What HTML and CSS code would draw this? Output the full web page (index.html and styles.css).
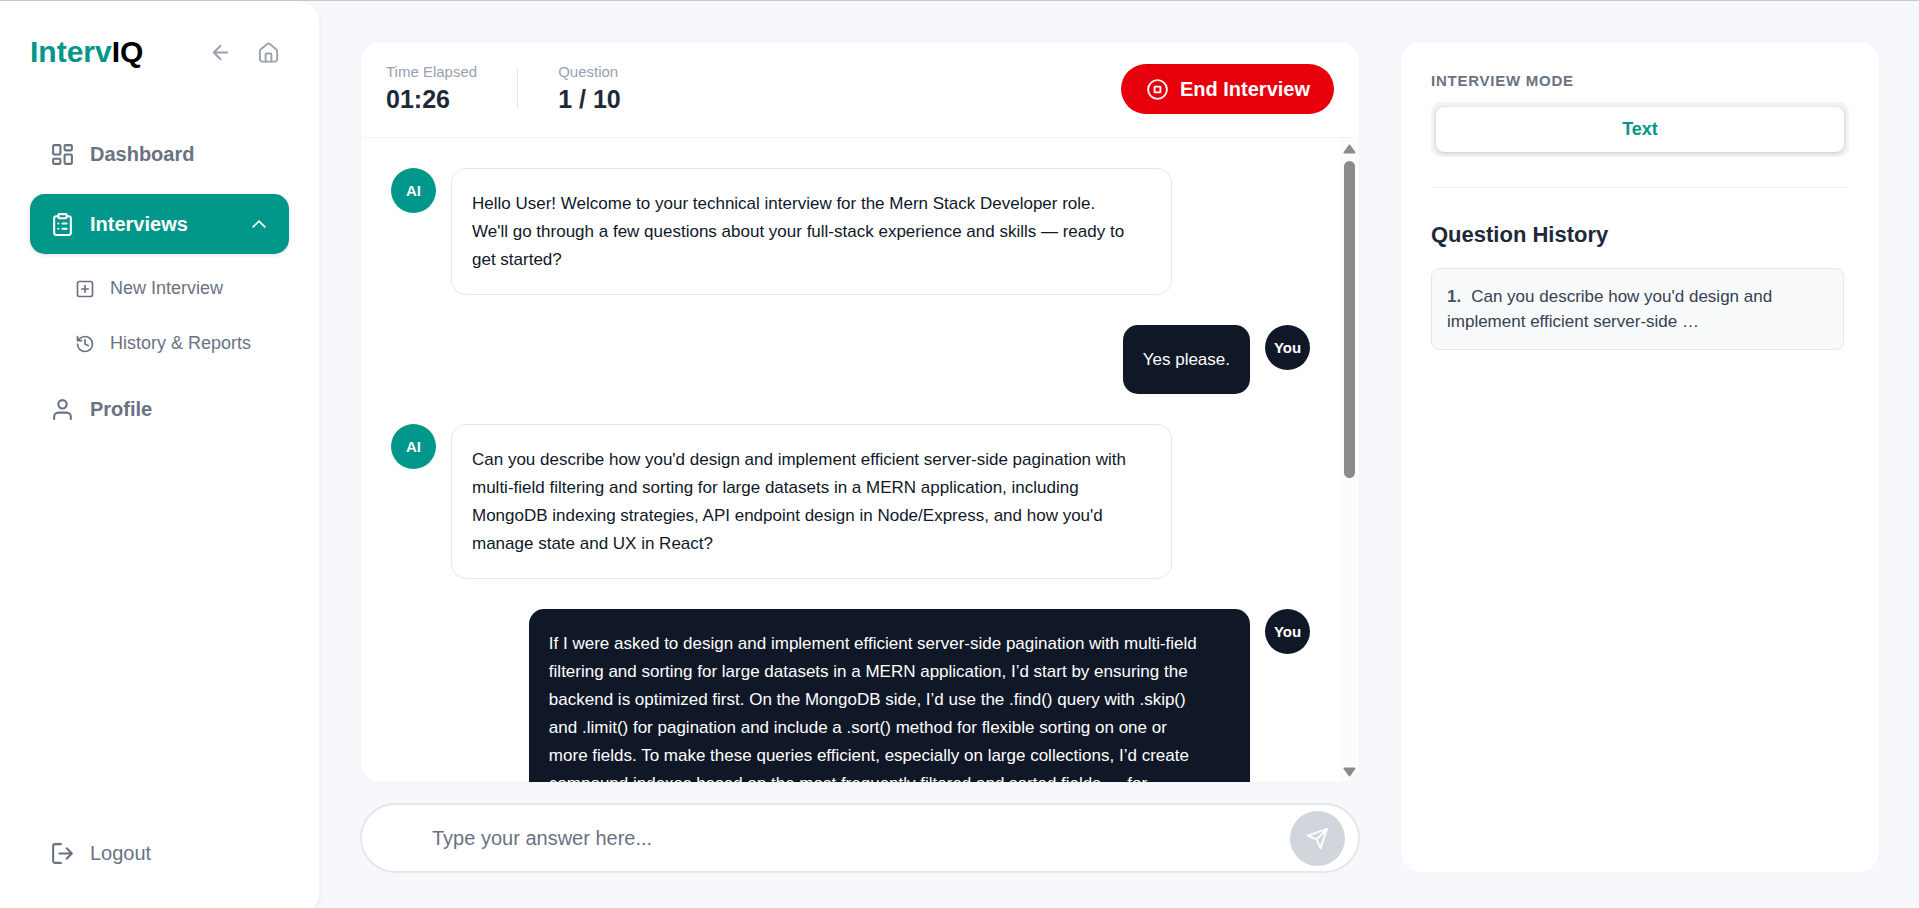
FILE: index.html
```html
<!DOCTYPE html>
<html lang="en">
<head>
<meta charset="utf-8">
<meta name="viewport" content="width=device-width, initial-scale=1">
<title>IntervIQ</title>
<link rel="stylesheet" href="styles.css">
</head>
<body>
<div class="app">
  <aside class="sidebar">
    <div class="brand-row">
      <a class="brand" href="#"><span class="brand-accent">Interv</span>IQ</a>
      <div class="brand-actions">
        <button class="icon-button" type="button" aria-label="Back"><svg class="icon icon-md" viewBox="0 0 24 24"><path d="M19 12H5M12 19l-7-7 7-7"/></svg></button>
        <a class="icon-button" href="#" aria-label="Home"><svg class="icon icon-md" viewBox="0 0 24 24"><path d="M3 10.500a2 2 0 0 1 .8-1.600l7-5.900a2 2 0 0 1 2.400 0l7 5.900a2 2 0 0 1 .8 1.600V19a2.500 2.500 0 0 1-2.500 2.500h-13A2.500 2.500 0 0 1 3 19z"/><path d="M9 21.500V14a1 1 0 0 1 1-1h4a1 1 0 0 1 1 1v7.500"/></svg></a>
      </div>
    </div>
    <nav class="nav">
      <a class="nav-item" href="#"><svg class="icon" viewBox="0 0 24 24"><rect x="3" y="3" width="7" height="9" rx="1"/><rect x="14" y="3" width="7" height="5" rx="1"/><rect x="14" y="12" width="7" height="9" rx="1"/><rect x="3" y="16" width="7" height="5" rx="1"/></svg>Dashboard</a>
      <button class="nav-item nav-active" type="button" aria-expanded="true"><svg class="icon" viewBox="0 0 24 24"><rect x="8" y="2" width="8" height="4" rx="1"/><path d="M16 4h2a2 2 0 0 1 2 2v14a2 2 0 0 1-2 2H6a2 2 0 0 1-2-2V6a2 2 0 0 1 2-2h2M12 11h4M12 16h4M8 11h.01M8 16h.01"/></svg>Interviews<svg class="icon icon-sm nav-chevron" viewBox="0 0 24 24"><path d="m5 15.500 7-7 7 7"/></svg></button>
      <div class="subnav">
        <a class="subnav-item" href="#"><svg class="icon icon-sm" viewBox="0 0 24 24"><rect x="3" y="3" width="18" height="18" rx="2"/><path d="M8 12h8M12 8v8"/></svg>New Interview</a>
        <a class="subnav-item" href="#"><svg class="icon icon-sm" viewBox="0 0 24 24"><path d="M3 12a9 9 0 1 0 9-9 9.750 9.750 0 0 0-6.740 2.740L3 8M3 3v5h5M12 7v5l4 2"/></svg>History &amp; Reports</a>
      </div>
      <a class="nav-item" href="#"><svg class="icon" viewBox="0 0 24 24"><circle cx="12" cy="7" r="4"/><path d="M20 21v-2a4 4 0 0 0-4-4H8a4 4 0 0 0-4 4v2"/></svg>Profile</a>
    </nav>
    <button class="nav-item logout" type="button"><svg class="icon" viewBox="0 0 24 24"><path d="M10.500 3H5a2 2 0 0 0-2 2v14a2 2 0 0 0 2 2h5.500M9 12h12M16 7l5 5-5 5"/></svg>Logout</button>
  </aside>

  <main class="main">
    <div class="chat-column">
      <section class="card chat">
        <header class="chat-header">
          <div class="stat"><span class="stat-label">Time Elapsed</span><span class="stat-value">01:26</span></div>
          <div class="stat-divider"></div>
          <div class="stat"><span class="stat-label">Question</span><span class="stat-value">1 / 10</span></div>
          <button class="end-button" type="button"><svg class="icon icon-thin" viewBox="0 0 24 24"><circle cx="12" cy="12" r="9"/><rect x="9.200" y="9.200" width="5.600" height="5.600" rx=".5"/></svg>End Interview</button>
        </header>
        <div class="chat-body">
          <div class="messages">
            <div class="message">
              <div class="avatar avatar-ai">AI</div>
              <p class="bubble bubble-ai">Hello User! Welcome to your technical interview for the Mern Stack Developer role.<br>We'll go through a few questions about your full-stack experience and skills — ready to<br>get started?</p>
            </div>
            <div class="message message-user">
              <div class="avatar avatar-user">You</div>
              <p class="bubble bubble-user">Yes please.</p>
            </div>
            <div class="message message-wide">
              <div class="avatar avatar-ai">AI</div>
              <p class="bubble bubble-ai">Can you describe how you'd design and implement efficient server-side pagination with<br>multi-field filtering and sorting for large datasets in a MERN application, including<br>MongoDB indexing strategies, API endpoint design in Node/Express, and how you'd<br>manage state and UX in React?</p>
            </div>
            <div class="message message-user message-wide">
              <div class="avatar avatar-user">You</div>
              <p class="bubble bubble-user">If I were asked to design and implement efficient server-side pagination with multi-field<br>filtering and sorting for large datasets in a MERN application, I’d start by ensuring the<br>backend is optimized first. On the MongoDB side, I’d use the .find() query with .skip()<br>and .limit() for pagination and include a .sort() method for flexible sorting on one or<br>more fields. To make these queries efficient, especially on large collections, I’d create<br>compound indexes based on the most frequently filtered and sorted fields — for</p>
            </div>
          </div>
          <div class="scrollbar" aria-hidden="true">
            <svg class="scroll-arrow" viewBox="0 0 13 10"><path d="M6.500 1.500 11.500 8.500H1.500z"/></svg>
            <div class="scroll-track"><div class="scroll-thumb"></div></div>
            <svg class="scroll-arrow" viewBox="0 0 13 10"><path d="M6.500 8.500 11.500 1.500H1.500z"/></svg>
          </div>
        </div>
      </section>
      <form class="composer">
        <input class="composer-input" type="text" aria-label="Your answer" placeholder="Type your answer here...">
        <button class="send-button" type="button" aria-label="Send"><svg class="icon icon-md" viewBox="0 0 24 24"><path d="m22 2-7 20-4-9-9-4ZM22 2 11 13"/></svg></button>
      </form>
    </div>

    <aside class="card side">
      <h2 class="mode-title">INTERVIEW MODE</h2>
      <div class="mode-switch"><button class="mode-option" type="button">Text</button></div>
      <h3 class="history-title">Question History</h3>
      <ol class="history">
        <li class="history-item"><b class="history-number">1.</b>Can you describe how you'd design and implement efficient server-side …</li>
      </ol>
    </aside>
  </main>
</div>
</body>
</html>
```

FILE: styles.css
```css
* {
  box-sizing: border-box;
}

body {
  margin: 0;
  background: #f7f8fc;
  font-family: "Liberation Sans", Arial, sans-serif;
  color: #101828;
}

button,
input {
  font: inherit;
  color: inherit;
  border: 0;
  background: none;
  padding: 0;
}

a {
  color: inherit;
  text-decoration: none;
}

.app {
  display: flex;
  height: 100vh;
  overflow: hidden;
  border-top: 1px solid #c8c8ca;
}

.icon {
  width: 25px;
  height: 25px;
  flex: none;
  fill: none;
  stroke: currentColor;
  stroke-width: 2;
  stroke-linecap: round;
  stroke-linejoin: round;
}

.icon-md {
  width: 23px;
  height: 23px;
}

.icon-sm {
  width: 20px;
  height: 20px;
}

.icon-thin {
  stroke-width: 1.8;
}

/* Sidebar */
.sidebar {
  display: flex;
  flex-direction: column;
  flex: none;
  width: 320px;
  margin-bottom: -5px;
  padding: 30px;
  background: #fff;
  border-right: 1px solid #f3f4f6;
  border-radius: 0 20px 20px 0;
  box-shadow: 0 1px 3px rgba(0, 0, 0, 0.1);
}

.brand-row {
  display: flex;
  align-items: center;
  justify-content: space-between;
  height: 42px;
  margin-bottom: 51px;
  padding-right: 9px;
}

.brand {
  font-size: 30px;
  font-weight: 700;
  color: #000;
}

.brand-accent {
  color: #009689;
}

.brand-actions {
  display: flex;
  gap: 25px;
  color: #99a1af;
}

.icon-button {
  display: flex;
  align-items: center;
}

.nav {
  display: flex;
  flex-direction: column;
  gap: 10px;
}

.nav-item {
  display: flex;
  align-items: center;
  gap: 15px;
  height: 60px;
  padding: 0 20px;
  border-radius: 15px;
  font-size: 20px;
  font-weight: 700;
  color: #6a7282;
}

.nav-active {
  background: #009689;
  color: #fff;
  box-shadow: 0 1px 4px rgba(0, 0, 0, 0.14);
}

.nav-chevron {
  margin-left: auto;
}

.subnav {
  display: flex;
  flex-direction: column;
  gap: 10px;
  padding: 2px 0 3px 45px;
}

.subnav-item {
  display: flex;
  align-items: center;
  gap: 15px;
  height: 45px;
  font-size: 18px;
  color: #6a7282;
}

.logout {
  margin-top: auto;
  font-weight: 400;
}

/* Main area */
.main {
  display: flex;
  flex: 1;
  min-width: 0;
  gap: 40px;
  padding: 40px 39px 35px 40px;
}

.card {
  background: #fff;
  border: 1px solid #f3f4f6;
  border-radius: 20px;
}

.chat-column {
  display: flex;
  flex-direction: column;
  flex: 1;
  min-width: 0;
  gap: 20px;
}

.chat {
  display: flex;
  flex-direction: column;
  flex: 1;
  min-height: 0;
  overflow: hidden;
}

.chat-header {
  display: flex;
  align-items: center;
  gap: 40px;
  padding: 20px 25px 21px;
  border-bottom: 1px solid #f3f4f6;
}

.stat {
  display: flex;
  flex-direction: column;
}

.stat-label {
  font-size: 15px;
  line-height: 20px;
  color: #99a1af;
}

.stat-value {
  font-size: 25px;
  font-weight: 700;
  line-height: 34px;
  color: #1e2939;
}

.stat-divider {
  width: 1px;
  height: 40px;
  background: #e5e7eb;
}

.end-button {
  display: flex;
  align-items: center;
  gap: 10px;
  height: 50px;
  margin-left: auto;
  padding: 0 24px;
  border-radius: 25px;
  background: #e7000b;
  color: #fff;
  font-size: 20px;
  font-weight: 700;
}

.chat-body {
  display: flex;
  flex: 1;
  min-height: 0;
}

.messages {
  display: flex;
  flex-direction: column;
  flex: 1;
  gap: 30px;
  padding: 30px;
  overflow: hidden;
}

.message {
  display: flex;
  flex: none;
  gap: 15px;
  width: 85%;
}

.message-user {
  flex-direction: row-reverse;
  align-self: flex-end;
}

.avatar {
  display: flex;
  align-items: center;
  justify-content: center;
  flex: none;
  width: 45px;
  height: 45px;
  border-radius: 50%;
  color: #fff;
  font-size: 15px;
  font-weight: 700;
}

.avatar-ai {
  background: #009689;
}

.avatar-user {
  background: #101828;
}

.bubble {
  margin: 0;
  padding: 21px 20px 20px;
  border-radius: 15px;
  font-size: 17px;
  line-height: 28px;
}

.bubble-ai {
  flex: 1;
  border: 1px solid #e5e7eb;
}

.bubble-user {
  background: #101828;
  color: #fff;
}

.message-wide .bubble {
  flex: 1;
}

.scrollbar {
  display: flex;
  flex-direction: column;
  align-items: center;
  flex: none;
  width: 19px;
  padding: 6px 0 5px;
  background: #fcfcfc;
}

.scroll-arrow {
  width: 13px;
  height: 10px;
  fill: #8b8b8b;
  stroke: #8b8b8b;
  stroke-width: 2;
  stroke-linejoin: round;
}

.scroll-track {
  flex: 1;
  padding: 7px 0;
}

.scroll-thumb {
  width: 11px;
  height: 53%;
  border-radius: 6px;
  background: #8b8b8b;
}

.composer {
  display: flex;
  align-items: center;
  height: 70px;
  padding: 0 13px 0 70px;
  border: 2px solid #e5e7eb;
  border-radius: 35px;
  background: #fff;
}

.composer-input {
  flex: 1;
  min-width: 0;
  font-size: 20px;
  outline: 0;
}

.composer-input::placeholder {
  color: #6a7282;
}

.send-button {
  display: flex;
  align-items: center;
  justify-content: center;
  width: 55px;
  height: 55px;
  border-radius: 50%;
  background: #d1d5dc;
  color: #fff;
}

/* Side panel */
.side {
  flex: none;
  width: 480px;
  padding: 30px;
}

.mode-title {
  margin: 0 0 12px;
  font-size: 15px;
  line-height: 18px;
  letter-spacing: 0.05em;
  color: #6a7282;
}

.mode-switch {
  display: flex;
  padding: 5px;
  border-radius: 10px;
  background: #f3f4f6;
}

.mode-option {
  flex: 1;
  height: 45px;
  border-radius: 8px;
  background: #fff;
  box-shadow: 0 1px 4px rgba(0, 0, 0, 0.2);
  color: #009689;
  font-size: 18px;
  font-weight: 700;
}

.history-title {
  margin: 30px 0 0;
  padding: 32px 0 18px;
  border-top: 1px solid #f3f4f6;
  font-size: 22px;
  line-height: 30px;
  color: #1e2939;
}

.history {
  margin: 0;
  padding: 0 5px 0 0;
  list-style: none;
}

.history-item {
  padding: 15px;
  border: 1px solid #e5e7eb;
  border-radius: 8px;
  background: #f9fafb;
  font-size: 17px;
  line-height: 25px;
  color: #364153;
}

.history-number {
  margin-right: 10px;
  color: #4a5565;
}
```
